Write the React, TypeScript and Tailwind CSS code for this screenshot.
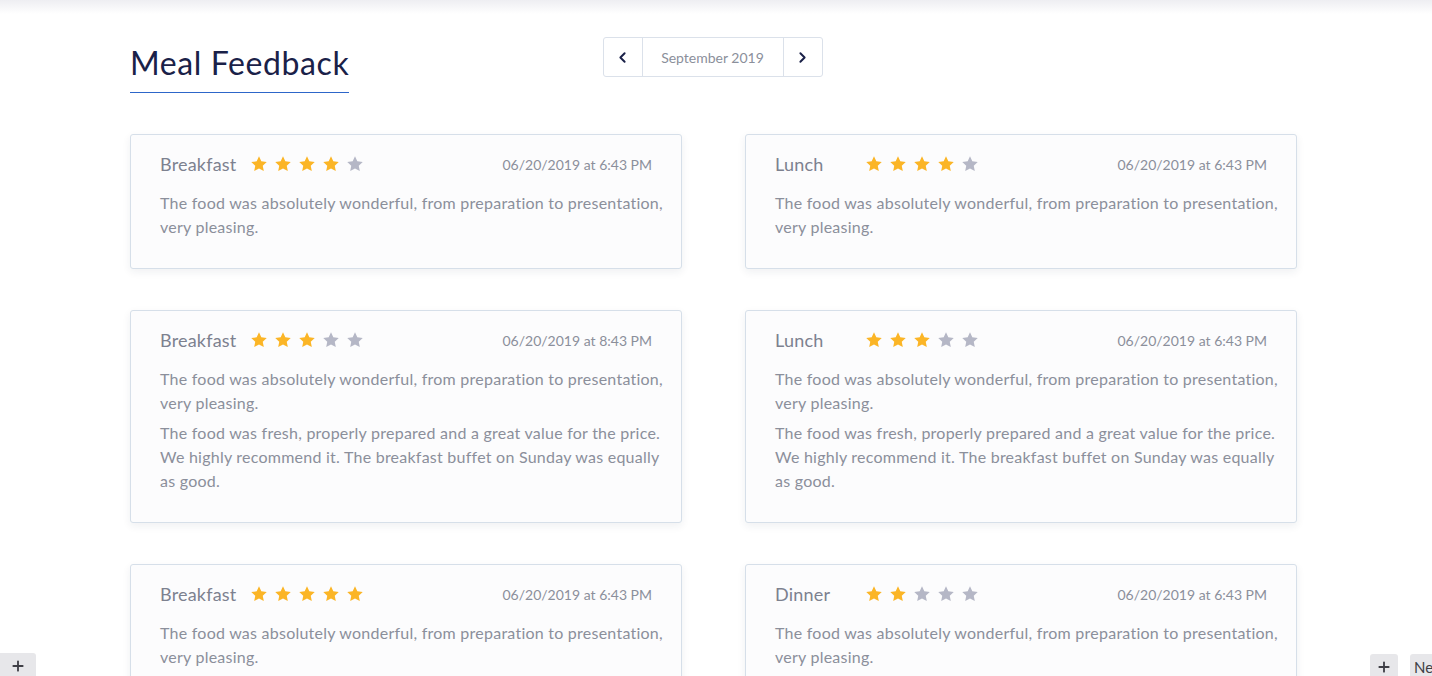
import React from 'react';
import { ChevronLeft, ChevronRight, Plus } from 'lucide-react';

interface Feedback {
  meal: string;
  rating: number;
  date: string;
  comments: string[];
}

const SHORT = 'The food was absolutely wonderful, from preparation to presentation, very pleasing.';
const LONG = 'The food was fresh, properly prepared and a great value for the price. We highly recommend it. The breakfast buffet on Sunday was equally as good.';

const feedback: Feedback[] = [
  { meal: 'Breakfast', rating: 4, date: '06/20/2019 at 6:43 PM', comments: [SHORT] },
  { meal: 'Lunch', rating: 4, date: '06/20/2019 at 6:43 PM', comments: [SHORT] },
  { meal: 'Breakfast', rating: 3, date: '06/20/2019 at 8:43 PM', comments: [SHORT, LONG] },
  { meal: 'Lunch', rating: 3, date: '06/20/2019 at 6:43 PM', comments: [SHORT, LONG] },
  { meal: 'Breakfast', rating: 5, date: '06/20/2019 at 6:43 PM', comments: [SHORT] },
  { meal: 'Dinner', rating: 2, date: '06/20/2019 at 6:43 PM', comments: [SHORT] },
];

function Star({ filled }: { filled: boolean }) {
  return (
    <svg viewBox="0 0 24 24" className="w-[18px] h-[18px]">
      <path
        d="M12 1.8l3.1 6.6 7.2.9-5.3 5 1.4 7.1L12 17.9l-6.4 3.5L7 14.3l-5.3-5 7.2-.9z"
        fill={filled ? '#fbb526' : '#b5b7c6'}
      />
    </svg>
  );
}

function FeedbackCard({ item }: { item: Feedback }) {
  return (
    <div className="bg-[#fcfcfd] border border-[#d6dfe9] rounded-[3px] shadow-[0_3px_8px_rgba(30,40,70,0.07)] pl-[29px] pr-[12px] pt-[16px] pb-[29px]">
      <div className="flex items-center pr-[17px] h-[26px]">
        <span className="w-[90px] text-[18px] tracking-[0.2px] text-[#7d818f]">{item.meal}</span>
        <div className="flex gap-[6px]">
          {[1, 2, 3, 4, 5].map((n) => (
            <Star key={n} filled={n <= item.rating} />
          ))}
        </div>
        <span className="ml-auto text-[14px] text-[#8b8f9b]">{item.date}</span>
      </div>
      <div className="mt-[14px] flex flex-col gap-[6px]">
        {item.comments.map((c, i) => (
          <p key={i} className="text-[16px] leading-[24px] tracking-[0.24px] text-[#8b8f9b]">
            {c}
          </p>
        ))}
      </div>
    </div>
  );
}

export default function App() {
  return (
    <div className="relative h-[676px] overflow-hidden bg-white" style={{ fontFamily: 'Lato, "Noto Sans", sans-serif' }}>
      <div className="absolute inset-x-0 top-0 h-[14px] bg-gradient-to-b from-[#eeeef2] to-white" />

      <div className="w-[1167px] ml-[130px] pt-[37px]">
        <div className="grid grid-cols-[1fr_auto_1fr] items-start">
          <div>
            <h1 className="inline-block text-[32px] leading-[38px] tracking-[0.6px] text-[#1a2148] pt-[7px] pb-[10px] border-b border-[#2d66c9]">
              Meal Feedback
            </h1>
          </div>
          <div className="flex h-[40px] border border-[#dbe1ea] rounded-[3px] bg-white -ml-[2px]">
            <button className="w-[39px] flex items-center justify-center border-r border-[#dbe1ea] text-[#1a2148]">
              <ChevronLeft className="w-[17px] h-[17px]" strokeWidth={2.75} />
            </button>
            <div className="w-[140px] flex items-center justify-center text-[14px] text-[#8b8f9b]">
              September 2019
            </div>
            <button className="w-[39px] flex items-center justify-center border-l border-[#dbe1ea] text-[#1a2148]">
              <ChevronRight className="w-[17px] h-[17px]" strokeWidth={2.75} />
            </button>
          </div>
          <div />
        </div>

        <div className="grid grid-cols-2 gap-x-[63px] gap-y-[41px] mt-[41px]">
          {feedback.map((f, i) => (
            <FeedbackCard key={i} item={f} />
          ))}
        </div>
      </div>

      <button className="absolute left-0 top-[653px] w-[36px] h-[26px] bg-[#e7e7ea] rounded-tr-[3px] flex items-center justify-center text-[#3f3f46]">
        <Plus className="w-[16px] h-[16px]" strokeWidth={2.75} />
      </button>
      <button className="absolute left-[1370px] top-[654px] w-[28px] h-[26px] bg-[#e7e7ea] rounded-t-[3px] flex items-center justify-center text-[#3f3f46]">
        <Plus className="w-[16px] h-[16px]" strokeWidth={2.75} />
      </button>
      <button className="absolute left-[1410px] top-[654px] w-[40px] h-[26px] bg-[#e7e7ea] rounded-t-[3px] pl-[4px] text-left text-[15px] text-[#3f3f46]">
        New
      </button>
    </div>
  );
}
